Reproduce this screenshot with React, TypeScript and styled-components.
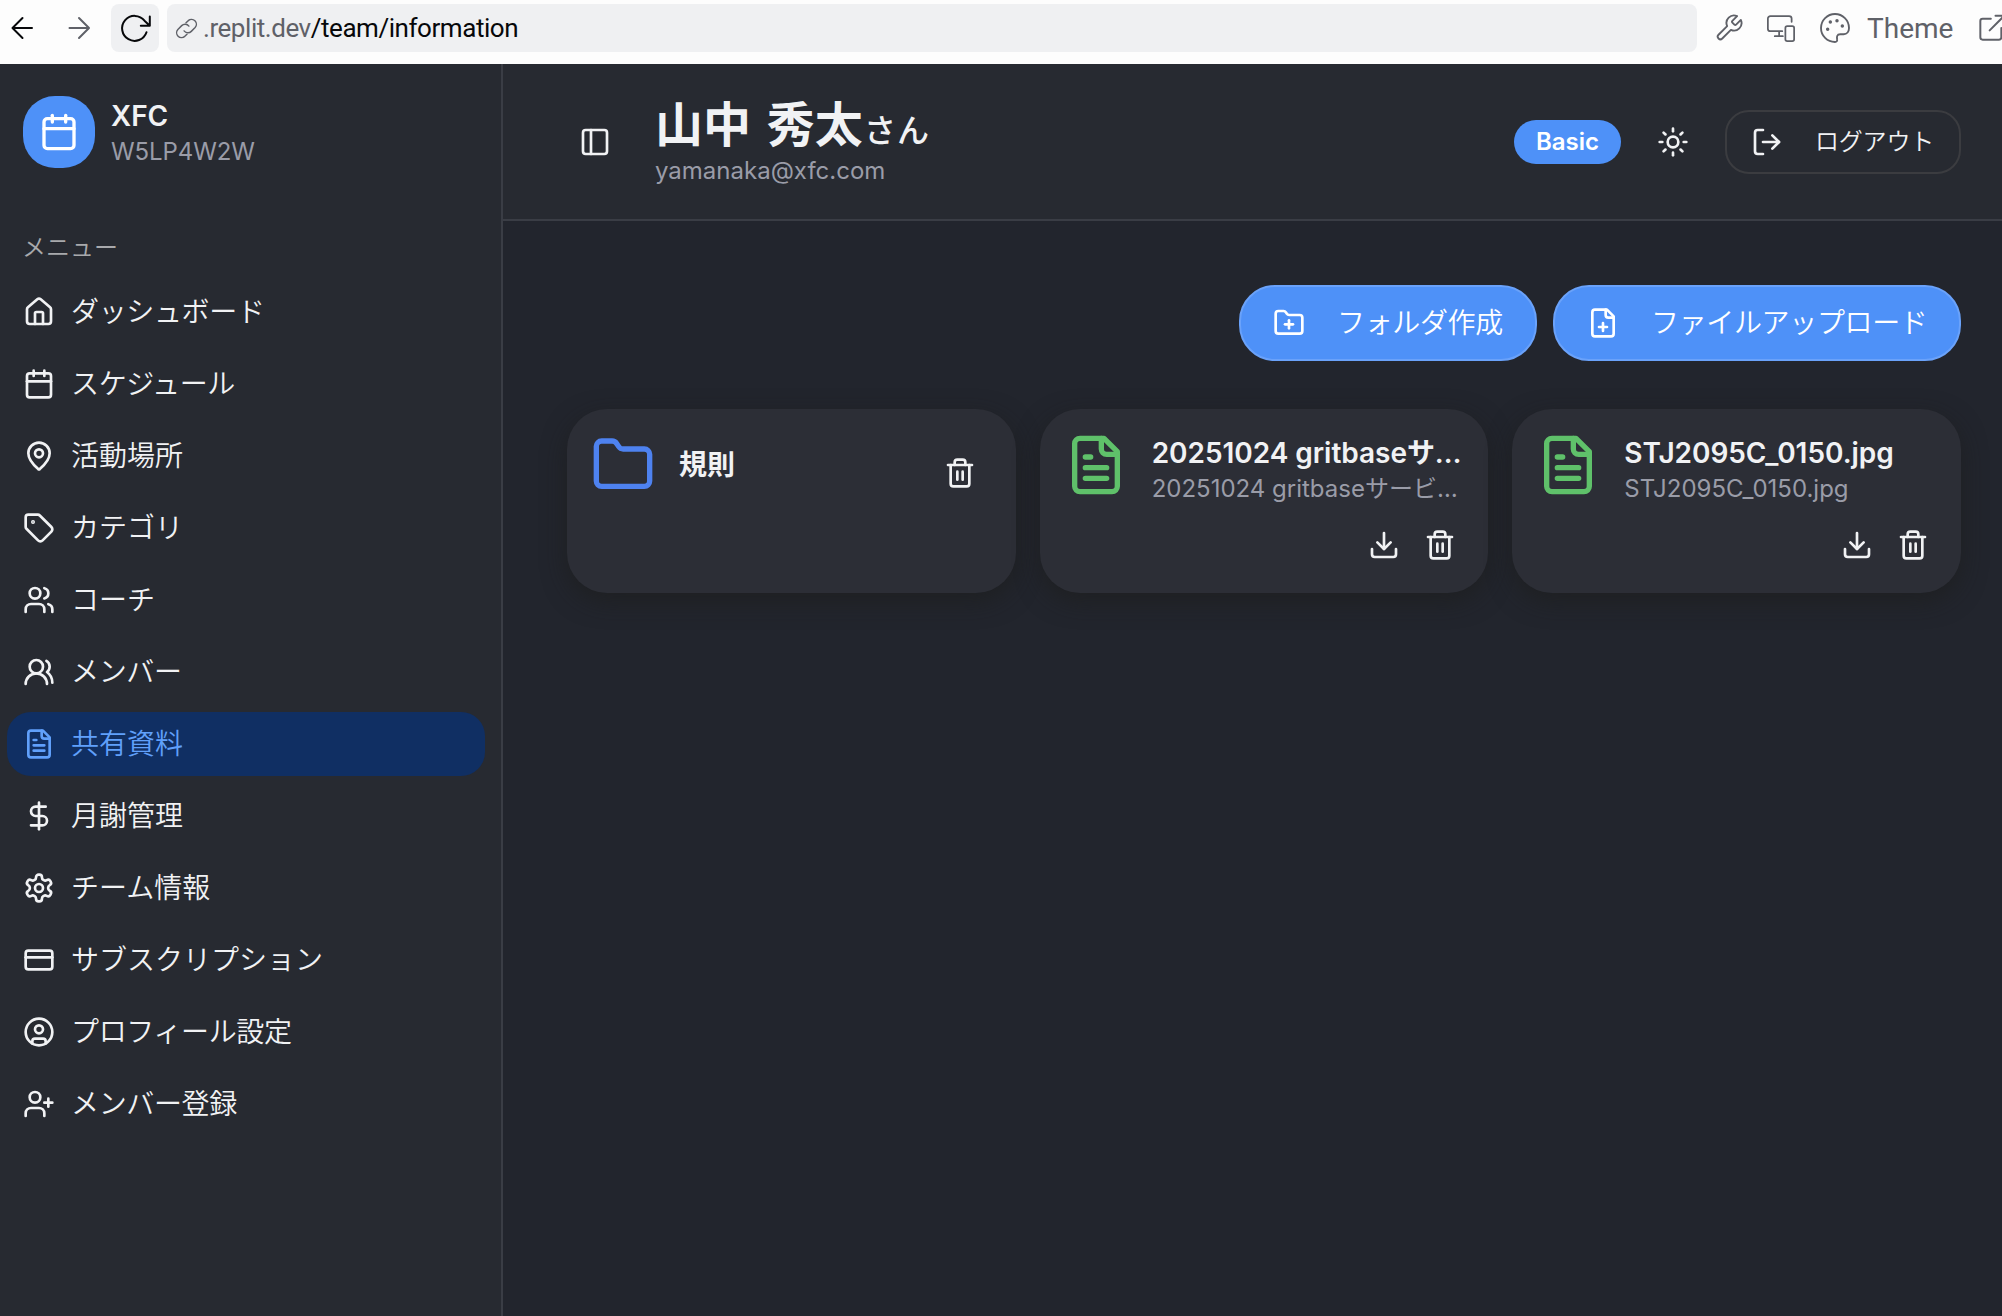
import React from "react";
import styled, { createGlobalStyle, css } from "styled-components";
import {
  House, Calendar, MapPin, Tag, Users, UsersRound, DollarSign, CreditCard,
  CircleUser, UserPlus, PanelLeft, Sun, LogOut, FolderPlus, Folder, Trash2, Download,
} from "lucide-react";

const sans = `Inter, "Noto Sans CJK JP", "Liberation Sans", sans-serif`;

const GlobalStyle = createGlobalStyle`
  *, *::before, *::after { box-sizing: border-box; }
  body { margin: 0; background: #22252d; font-family: ${sans}; overflow: hidden; }
  button { font: inherit; }
  svg { display: block; flex: none; }
  p, h1, ul { margin: 0; padding: 0; }
`;

const Screen = styled.div`
  display: flex;
  flex-direction: column;
  width: 2002px;
  height: 1316px;
  overflow: hidden;
`;

/* browser bar */
const BrowserBar = styled.header`
  flex: none;
  display: flex;
  align-items: flex-start;
  height: 64px;
  padding-top: 4px;
  background: #fdfdfd;
  color: #5f6168;
`;
const BarButton = styled.span<{ $width: number; $dark?: boolean; $filled?: boolean }>`
  flex: none;
  display: flex;
  align-items: center;
  justify-content: center;
  width: ${(p) => p.$width}px;
  height: 48px;
  border-radius: 8px;
  color: ${(p) => (p.$dark ? "#07080a" : "#5f6168")};
  ${(p) => p.$filled && css`background: #eff0f2;`}
`;
const AddressBar = styled.div`
  flex: none;
  display: flex;
  align-items: center;
  width: 1530px;
  height: 48px;
  margin-left: 8px;
  padding-left: 8px;
  border-radius: 8px;
  background: #eff0f2;
`;
const Address = styled.span`
  margin-left: 5px;
  font-family: Roboto, ${sans};
  font-size: 26px;
  line-height: 36px;
  letter-spacing: -0.45px;
  white-space: nowrap;
`;
const AddressPath = styled.span`
  color: #07080a;
`;
const BarTools = styled.div`
  display: flex;
  align-items: center;
  height: 48px;
  padding-left: 16px;
  white-space: nowrap;
`;
const ThemeLabel = styled.span`
  width: 87px;
  margin: 0 24px 0 14px;
  font-family: Roboto, ${sans};
  font-size: 28px;
`;

/* shell */
const Shell = styled.div`
  flex: 1;
  display: flex;
  min-height: 0;
  color: #f1f2f4;
`;
const Sidebar = styled.aside`
  flex: none;
  width: 503px;
  border-right: 2px solid #3a3d45;
  background: #272a31;
`;
const Brand = styled.div`
  display: flex;
  align-items: center;
  gap: 16px;
  height: 72px;
  margin: 32px 0 0 23px;
`;
const BrandMark = styled.span`
  display: flex;
  align-items: center;
  justify-content: center;
  width: 72px;
  height: 72px;
  border-radius: 32px;
  background: #4e91f8;
  color: #fff;
`;
const BrandName = styled.p`
  font-size: 28px;
  line-height: 40px;
  font-weight: 600;
`;
const BrandCode = styled.p`
  font-size: 24px;
  line-height: 32px;
  letter-spacing: -0.1px;
  color: #9a9ca8;
`;
const MenuTitle = styled.p`
  margin: 62px 0 0 22px;
  font-size: 24px;
  line-height: 36px;
  font-weight: 350;
  color: #a8a9ac;
`;
const Menu = styled.ul`
  display: flex;
  flex-direction: column;
  gap: 8px;
  margin: 14px 16px 0 7px;
  list-style: none;
`;
const MenuItem = styled.li<{ $active?: boolean; $tight?: boolean }>`
  display: flex;
  align-items: center;
  gap: 16px;
  height: 64px;
  padding-left: 16px;
  border-radius: 24px;
  font-size: 28px;
  line-height: 40px;
  font-weight: 350;
  letter-spacing: ${(p) => (p.$tight ? "-0.35px" : "0")};
  color: ${(p) => (p.$active ? "#60a0fb" : "#f1f2f4")};
  background: ${(p) => (p.$active ? "#102f63" : "transparent")};
`;

const Main = styled.main`
  flex: 1;
  min-width: 0;
  background: #22252d;
`;
const TopBar = styled.div`
  display: flex;
  align-items: center;
  height: 157px;
  padding: 0 41px 0 76px;
  border-bottom: 2px solid #3a3d45;
  background: #272a31;
`;
const UserBlock = styled.div`
  flex: 1;
  margin-left: 44px;
  padding-top: 3px;
`;
const UserName = styled.h1`
  height: 55px;
  font-size: 48px;
  line-height: 49px;
  font-weight: 700;
  word-spacing: 4.5px;
  white-space: nowrap;
`;
const Honorific = styled.span`
  margin-left: 1px;
  font-size: 32px;
  line-height: 1;
  font-weight: 500;
  letter-spacing: 1px;
`;
const UserMail = styled.p`
  font-size: 24px;
  line-height: 32px;
  color: #9a9ca8;
`;
const PlanBadge = styled.span`
  width: 107px;
  height: 44px;
  border-radius: 22px;
  background: #4e91f8;
  color: #fff;
  font-size: 24px;
  line-height: 44px;
  font-weight: 600;
  text-align: center;
`;
const IconButton = styled.button`
  display: flex;
  align-items: center;
  justify-content: center;
  width: 56px;
  height: 56px;
  padding: 0;
  border: 0;
  background: none;
  color: inherit;
`;
const ThemeToggle = styled(IconButton)`
  margin: 0 24px;
`;
const LogoutButton = styled.button`
  display: flex;
  align-items: center;
  gap: 32px;
  width: 236px;
  height: 64px;
  padding: 0 0 0 24px;
  border: 2px solid #3b3c40;
  border-radius: 24px;
  background: none;
  color: inherit;
  font-size: 24px;
  font-weight: 350;
  letter-spacing: -0.2px;
  white-space: nowrap;
`;
const Content = styled.section`
  padding: 64px 41px 0 64px;
`;
const Actions = styled.div`
  display: flex;
  justify-content: flex-end;
  gap: 16px;
`;
const ActionButton = styled.button<{ $width: number }>`
  display: flex;
  align-items: center;
  gap: 32px;
  width: ${(p) => p.$width}px;
  height: 76px;
  padding: 0 0 0 32px;
  border: 2px solid #6aa2fa;
  border-radius: 36px;
  background: #4e91f8;
  color: #fff;
  font-size: 28px;
  font-weight: 350;
  letter-spacing: -0.35px;
  white-space: nowrap;
`;
const ButtonLabel = styled.span`
  padding-bottom: 5px;
`;
const Cards = styled.div`
  display: grid;
  grid-template-columns: repeat(3, 1fr);
  gap: 24px;
  margin-top: 48px;
`;
const Card = styled.article`
  display: flex;
  flex-direction: column;
  justify-content: space-between;
  min-width: 0;
  height: 184px;
  padding: 24px 20px 20px 24px;
  border-radius: 40px;
  background: #2c2e36;
  box-shadow: 0 8px 24px rgba(28, 28, 26, 0.6);
`;
const CardHead = styled.div`
  display: flex;
  align-items: flex-start;
  gap: 24px;
`;
const CardText = styled.div`
  flex: 1;
  min-width: 0;
  height: 64px;
  white-space: nowrap;
`;
const FolderText = styled(CardText)`
  display: flex;
  align-items: center;
`;
const CardTitle = styled.p`
  font-size: 28px;
  line-height: 40px;
  font-weight: 600;
  letter-spacing: -0.04px;
`;
const CardFile = styled.p`
  font-size: 24px;
  line-height: 32px;
  color: #9a9ca8;
`;
const CardActions = styled.div`
  display: flex;
  justify-content: flex-end;
`;
const FolderAction = styled(IconButton)`
  margin: 12px 8px 0 0;
`;
const Blue = styled.span`
  color: #4e82f0;
`;
const Green = styled.span`
  color: #5fc16a;
`;

type Glyph = { size: number; children?: React.ReactNode; weight?: number };
const Icon = ({ size, children, weight = 2 }: Glyph) => (
  <svg width={size} height={size} viewBox="0 0 24 24" fill="none" stroke="currentColor"
    strokeWidth={weight} strokeLinecap="round" strokeLinejoin="round">{children}</svg>
);
const fileOutline = (
  <>
    <path d="M15 2H6a2 2 0 0 0-2 2v16a2 2 0 0 0 2 2h12a2 2 0 0 0 2-2V7Z" />
    <path d="M14 2v4a2 2 0 0 0 2 2h4" />
  </>
);
const FileText = ({ size }: { size: number }) => (
  <Icon size={size}>{fileOutline}<path d="M10 9H8M16 13H8M16 17H8" /></Icon>
);
const FilePlus = ({ size }: { size: number }) => (
  <Icon size={size}>{fileOutline}<path d="M9 15h6M12 18v-6" /></Icon>
);
const Settings = ({ size }: { size: number }) => (
  <Icon size={size}>
    <path d="M12.22 2h-.44a2 2 0 0 0-2 2v.18a2 2 0 0 1-1 1.73l-.43.25a2 2 0 0 1-2 0l-.15-.08a2 2 0 0 0-2.73.73l-.22.38a2 2 0 0 0 .73 2.73l.15.1a2 2 0 0 1 1 1.72v.51a2 2 0 0 1-1 1.74l-.15.09a2 2 0 0 0-.73 2.73l.22.38a2 2 0 0 0 2.73.73l.15-.08a2 2 0 0 1 2 0l.43.25a2 2 0 0 1 1 1.73V20a2 2 0 0 0 2 2h.44a2 2 0 0 0 2-2v-.18a2 2 0 0 1 1-1.73l.43-.25a2 2 0 0 1 2 0l.15.08a2 2 0 0 0 2.73-.73l.22-.39a2 2 0 0 0-.73-2.73l-.15-.08a2 2 0 0 1-1-1.74v-.5a2 2 0 0 1 1-1.74l.15-.09a2 2 0 0 0 .73-2.73l-.22-.38a2 2 0 0 0-2.73-.73l-.15.08a2 2 0 0 1-2 0l-.43-.25a2 2 0 0 1-1-1.73V4a2 2 0 0 0-2-2z" />
    <circle cx="12" cy="12" r="3" />
  </Icon>
);

const BackArrow = () => (
  <Icon size={24}><path d="M21 12H2M11.5 2 1.5 12l10 10" /></Icon>
);
const ForwardArrow = () => (
  <Icon size={24}><path d="M2.500 12H21.500M12 2l10 10-10 10" /></Icon>
);
const Reload = () => (
  <svg width="32" height="32" viewBox="0 0 32 32" fill="none" stroke="currentColor" strokeWidth="2" strokeLinecap="round" strokeLinejoin="round">
    <path d="M27.5 20.3A12.5 12.5 0 1 1 25.5 8.700L30.5 13.5M30.8 4.5v9.2h-9" />
  </svg>
);
const Link = () => (
  <Icon size={23} weight={1.5}>
    <path d="M9.5 14.5a5 5 0 0 0 7.5.5l4-4a5.1 5.1 0 0 0-7.2-7.2l-2.3 2.3" />
    <path d="M14.5 9.5A5 5 0 0 0 7 9l-4 4a5.1 5.1 0 0 0 7.2 7.2l2.3-2.3" />
  </Icon>
);
const Wrench = () => (
  <Icon size={30} weight={1.5}>
    <path d="M14.7 6.3a1 1 0 0 0 0 1.4l1.6 1.6a1 1 0 0 0 1.4 0l3.77-3.77a6 6 0 0 1-7.94 7.94l-6.91 6.91a2.12 2.12 0 0 1-3-3l6.91-6.91a6 6 0 0 1 7.94-7.94z" />
  </Icon>
);
const Devices = () => (
  <Icon size={30} weight={1.4}>
    <path d="M20.5 7V4.5a2 2 0 0 0-2-2h-15a2 2 0 0 0-2 2v8a2 2 0 0 0 2 2H13M10.5 14.5v4M7 18.5h6.5" />
    <rect x="15.5" y="10.5" width="7" height="12" rx="1.5" />
  </Icon>
);
const PaletteGlyph = () => (
  <Icon size={32} weight={1.4}>
    <path d="M12 1.5C6.2 1.5 1.5 6.2 1.5 12S6.2 22.5 12 22.5c1.3 0 1.8-.9 1.6-1.9-.3-1.8-.4-3.9 2.4-3.9h2.5c2.5 0 4-2 4-4.700C22.5 6.2 17.8 1.5 12 1.5Z" />
    <circle cx="6.5" cy="13" r=".6" fill="currentColor" /><circle cx="8.5" cy="7.5" r=".6" fill="currentColor" />
    <circle cx="13.5" cy="6.5" r=".6" fill="currentColor" /><circle cx="17.5" cy="10.5" r=".6" fill="currentColor" />
  </Icon>
);
const OpenExternal = () => (
  <Icon size={28} weight={1.7}>
    <path d="M11 4H4a2 2 0 0 0-2 2v14a2 2 0 0 0 2 2h14a2 2 0 0 0 2-2v-8M15 1.5h7.5V9M22 2 10 14" />
  </Icon>
);

const menu = [
  { icon: House, label: "ダッシュボード", tight: true },
  { icon: Calendar, label: "スケジュール", tight: true },
  { icon: MapPin, label: "活動場所" },
  { icon: Tag, label: "カテゴリ" },
  { icon: Users, label: "コーチ" },
  { icon: UsersRound, label: "メンバー", tight: true },
  { icon: FileText, label: "共有資料", active: true },
  { icon: DollarSign, label: "月謝管理" },
  { icon: Settings, label: "チーム情報" },
  { icon: CreditCard, label: "サブスクリプション" },
  { icon: CircleUser, label: "プロフィール設定", tight: true },
  { icon: UserPlus, label: "メンバー登録", tight: true },
];

const files = [
  { title: "20251024 gritbaseサ…", name: "20251024 gritbaseサービ…" },
  { title: "STJ2095C_0150.jpg", name: "STJ2095C_0150.jpg" },
];

export default function App() {
  return (
    <Screen>
      <GlobalStyle />
      <BrowserBar>
        <BarButton $width={46} $dark><BackArrow /></BarButton>
        <BarButton $width={65}><ForwardArrow /></BarButton>
        <BarButton $width={48} $dark $filled><Reload /></BarButton>
        <AddressBar>
          <Link />
          <Address>.replit.dev<AddressPath>/team/information</AddressPath></Address>
        </AddressBar>
        <BarTools>
          <BarButton $width={32}><Wrench /></BarButton>
          <BarButton $width={72}><Devices /></BarButton>
          <BarButton $width={36}><PaletteGlyph /></BarButton>
          <ThemeLabel>Theme</ThemeLabel>
          <OpenExternal />
        </BarTools>
      </BrowserBar>
      <Shell>
        <Sidebar>
          <Brand>
            <BrandMark><Calendar size={40} /></BrandMark>
            <div>
              <BrandName>XFC</BrandName>
              <BrandCode>W5LP4W2W</BrandCode>
            </div>
          </Brand>
          <MenuTitle>メニュー</MenuTitle>
          <Menu>
            {menu.map(({ icon: Glyph, label, active, tight }) => (
              <MenuItem key={label} $active={active} $tight={tight}><Glyph size={32} />{label}</MenuItem>
            ))}
          </Menu>
        </Sidebar>
        <Main>
          <TopBar>
            <PanelLeft size={32} />
            <UserBlock>
              <UserName>山中 秀太<Honorific>さん</Honorific></UserName>
              <UserMail>yamanaka@xfc.com</UserMail>
            </UserBlock>
            <PlanBadge>Basic</PlanBadge>
            <ThemeToggle><Sun size={32} /></ThemeToggle>
            <LogoutButton><LogOut size={32} /><ButtonLabel>ログアウト</ButtonLabel></LogoutButton>
          </TopBar>
          <Content>
            <Actions>
              <ActionButton $width={298}><FolderPlus size={32} /><ButtonLabel>フォルダ作成</ButtonLabel></ActionButton>
              <ActionButton $width={408}><FilePlus size={32} /><ButtonLabel>ファイルアップロード</ButtonLabel></ActionButton>
            </Actions>
            <Cards>
              <Card>
                <CardHead>
                  <Blue><Folder size={64} /></Blue>
                  <FolderText><CardTitle>規則</CardTitle></FolderText>
                  <FolderAction><Trash2 size={32} /></FolderAction>
                </CardHead>
              </Card>
              {files.map((f) => (
                <Card key={f.title}>
                  <CardHead>
                    <Green><FileText size={64} /></Green>
                    <CardText>
                      <CardTitle>{f.title}</CardTitle>
                      <CardFile>{f.name}</CardFile>
                    </CardText>
                  </CardHead>
                  <CardActions>
                    <IconButton><Download size={32} /></IconButton>
                    <IconButton><Trash2 size={32} /></IconButton>
                  </CardActions>
                </Card>
              ))}
            </Cards>
          </Content>
        </Main>
      </Shell>
    </Screen>
  );
}
